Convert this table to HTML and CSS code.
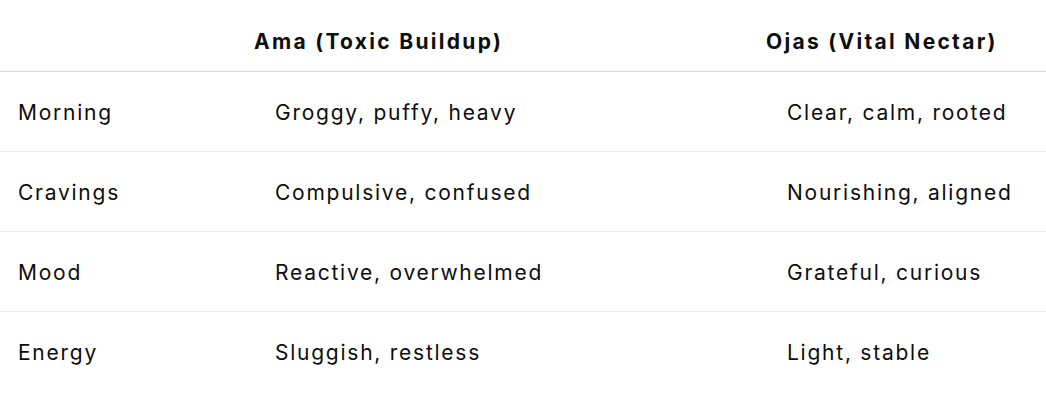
FILE: index.html
```html
<!DOCTYPE html>
<html lang="en">
<head>
<meta charset="utf-8">
<title>Ama vs Ojas</title>
<link rel="stylesheet" href="styles.css">
</head>
<body>
<table class="compare">
  <colgroup>
    <col class="c1">
    <col class="c2">
    <col class="c3">
  </colgroup>
  <thead>
    <tr>
      <th></th>
      <th>Ama (Toxic Buildup)</th>
      <th>Ojas (Vital Nectar)</th>
    </tr>
  </thead>
  <tbody>
    <tr><td>Morning</td><td>Groggy, puffy, heavy</td><td>Clear, calm, rooted</td></tr>
    <tr><td>Cravings</td><td>Compulsive, confused</td><td>Nourishing, aligned</td></tr>
    <tr><td>Mood</td><td>Reactive, overwhelmed</td><td>Grateful, curious</td></tr>
    <tr><td>Energy</td><td>Sluggish, restless</td><td>Light, stable</td></tr>
  </tbody>
</table>
</body>
</html>
```

FILE: styles.css
```css
html, body {
  margin: 0;
  padding: 0;
  background: #ffffff;
}

body {
  font-family: Inter, "Noto Sans", sans-serif;
  color: #0d0d0d;
}

.compare {
  width: 1046px;
  border-collapse: collapse;
  table-layout: fixed;
}

.c1 { width: 254px; }
.c2 { width: 512px; }
.c3 { width: 280px; }

.compare th {
  box-sizing: border-box;
  height: 71px;
  padding: 13px 0 0 0;
  text-align: left;
  font-weight: 700;
  font-size: 21px;
  letter-spacing: 2.3px;
  vertical-align: middle;
  border-bottom: 1px solid #d9d9d9;
}

.compare td {
  box-sizing: border-box;
  height: 80px;
  padding: 3px 0 0 21px;
  font-size: 21px;
  letter-spacing: 1.75px;
  vertical-align: middle;
  border-bottom: 1px solid #ececec;
}

.compare td:first-child {
  padding-left: 18px;
}

.compare tbody tr:last-child td {
  border-bottom: none;
}
```
